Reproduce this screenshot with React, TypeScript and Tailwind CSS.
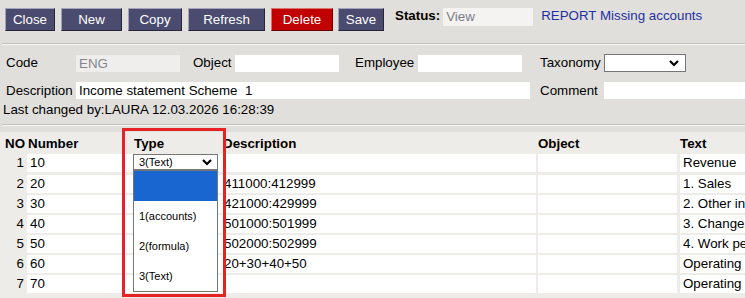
import React from 'react';

const Chevron = () => (
  <svg width="10" height="7" viewBox="0 0 10 7" className="shrink-0">
    <polyline points="1,1 5,5 9,1" fill="none" stroke="#000" strokeWidth="2.2" />
  </svg>
);

const Btn: React.FC<{ label: string; w: string; danger?: boolean }> = ({ label, w, danger }) => (
  <button
    className={`${w} shrink-0 h-[23px] text-[13.33px] leading-none text-white border ${
      danger
        ? 'bg-[#c10000] border-t-[#e07070] border-l-[#e07070] border-r-[#6a0000] border-b-[#6a0000]'
        : 'bg-[#4a4b6e] border-t-[#a3a3bd] border-l-[#a3a3bd] border-r-[#25253a] border-b-[#25253a]'
    }`}
  >
    {label}
  </button>
);

const rows = [
  { no: 1, num: '10', desc: '', text: 'Revenue' },
  { no: 2, num: '20', desc: '411000:412999', text: '1. Sales' },
  { no: 3, num: '30', desc: '421000:429999', text: '2. Other income' },
  { no: 4, num: '40', desc: '501000:501999', text: '3. Changes in inventories' },
  { no: 5, num: '50', desc: '502000:502999', text: '4. Work performed' },
  { no: 6, num: '60', desc: '20+30+40+50', text: 'Operating' },
  { no: 7, num: '70', desc: '', text: 'Operating' },
];

export default function App() {
  return (
    <div className="relative w-[745px] h-[298px] overflow-hidden bg-[#e0dfdb] font-['Liberation_Sans',Arial,sans-serif] text-[13.33px] text-black">
      {/* toolbar */}
      <div className="flex items-start pt-[8px] pl-[5px]">
        <div className="flex gap-[6px] shrink-0">
          <Btn label="Close" w="w-[50px]" />
          <Btn label="New" w="w-[61px]" />
          <Btn label="Copy" w="w-[54px]" />
          <Btn label="Refresh" w="w-[77px]" />
          <Btn label="Delete" w="w-[62px]" danger />
        </div>
        <div className="ml-[5px] shrink-0">
          <Btn label="Save" w="w-[46px]" />
        </div>
        <span className="ml-[11px] shrink-0 font-bold leading-[16px] whitespace-nowrap">Status:</span>
        <div className="ml-[3px] shrink-0 w-[90px] h-[18px] bg-[#f4f3f1] text-[#7c7c88] pl-[3px] leading-[18px]">View</div>
        <a className="ml-[8px] shrink-0 text-[#1f2fa3] leading-[16px] whitespace-nowrap">REPORT Missing accounts</a>
      </div>

      <div className="mt-[12px] ml-[2px] border-t border-t-[#c4c2be] border-b border-b-[#f6f6f5]" />

      {/* form */}
      <div className="flex items-center h-[18px] mt-[9px] pl-[6px] whitespace-nowrap [&>*]:shrink-0">
        <span className="w-[70px]">Code</span>
        <div className="w-[104px] h-[17px] bg-[#efeeec] text-[#85858d] pl-[3px] leading-[17px]">ENG</div>
        <span className="ml-[13px] w-[42px]">Object</span>
        <div className="w-[104px] h-[17px] bg-white" />
        <span className="ml-[16px] w-[63px]">Employee</span>
        <div className="w-[104px] h-[17px] bg-white" />
        <span className="ml-[18px] w-[64px]">Taxonomy</span>
        <div className="w-[82px] h-[18px] bg-white border border-[#767676] flex items-center justify-end pr-[6px]">
          <Chevron />
        </div>
      </div>
      <div className="flex items-center h-[17px] mt-[10px] pl-[6px] whitespace-nowrap [&>*]:shrink-0">
        <span className="w-[70px]">Description</span>
        <div className="w-[454px] h-[17px] bg-white pl-[3px] leading-[17px] whitespace-pre">Income statement Scheme  1</div>
        <span className="ml-[10px] w-[64px]">Comment</span>
        <div className="w-[160px] h-[17px] bg-white" />
      </div>
      <div className="mt-[3px] pl-[3px] h-[16px] leading-[16px] whitespace-nowrap">Last changed by:LAURA 12.03.2026 16:28:39</div>

      <div className="mt-[6px] ml-[2px] border-t border-t-[#c4c2be] border-b border-b-[#f6f6f5]" />

      {/* table */}
      <div className="mt-[6px] bg-[#edece9] h-[200px] whitespace-nowrap">
        <div className="flex items-center h-[22px] pt-[2px] font-bold [&>*]:shrink-0">
          <span className="w-[27px] pl-[5px]">NO</span>
          <span className="w-[104px] pl-[1px]">Number</span>
          <span className="w-[90px] pl-[3px]">Type</span>
          <span className="w-[317px] pl-[2px]">Description</span>
          <span className="w-[142px]">Object</span>
          <span>Text</span>
        </div>
        {rows.map((r) => (
          <div key={r.no} className={`flex h-[18px] leading-[18px] [&>*]:shrink-0 ${r.no === 1 ? 'mb-[3px]' : 'mb-[2px]'}`}>
            <span className="w-[27px] text-right pr-[3px]">{r.no}</span>
            <div className="w-[104px] bg-white pl-[3px]">{r.num}</div>
            <div className="w-[90px] bg-white pl-[2px]">
              {r.no === 1 && (
                <div className="w-[85px] h-[16px] border border-[#767676] bg-white flex items-center justify-between pl-[5px] pr-[5px] text-[11px] leading-none">
                  <span>3(Text)</span>
                  <Chevron />
                </div>
              )}
            </div>
            <div className="w-[315px] bg-white pl-[3px]">{r.desc}</div>
            <div className="w-[139px] ml-[2px] bg-white" />
            <div className="w-[200px] ml-[3px] bg-white pl-[3px] overflow-hidden">{r.text}</div>
          </div>
        ))}
      </div>

      {/* open select list */}
      <div className="absolute left-[133px] top-[170px] w-[85px] h-[122px] bg-white border border-[#767676] text-[11px]">
        <div className="h-[30px] bg-[#1a66d1]" />
        <div className="h-[30px] leading-[30px] pl-[5px]">1(accounts)</div>
        <div className="h-[30px] leading-[30px] pl-[5px]">2(formula)</div>
        <div className="h-[30px] leading-[30px] pl-[5px]">3(Text)</div>
      </div>

      {/* highlight */}
      <div className="absolute left-[122px] top-[128px] w-[104px] h-[169px] border-[3px] border-[#e42424]" />
    </div>
  );
}
